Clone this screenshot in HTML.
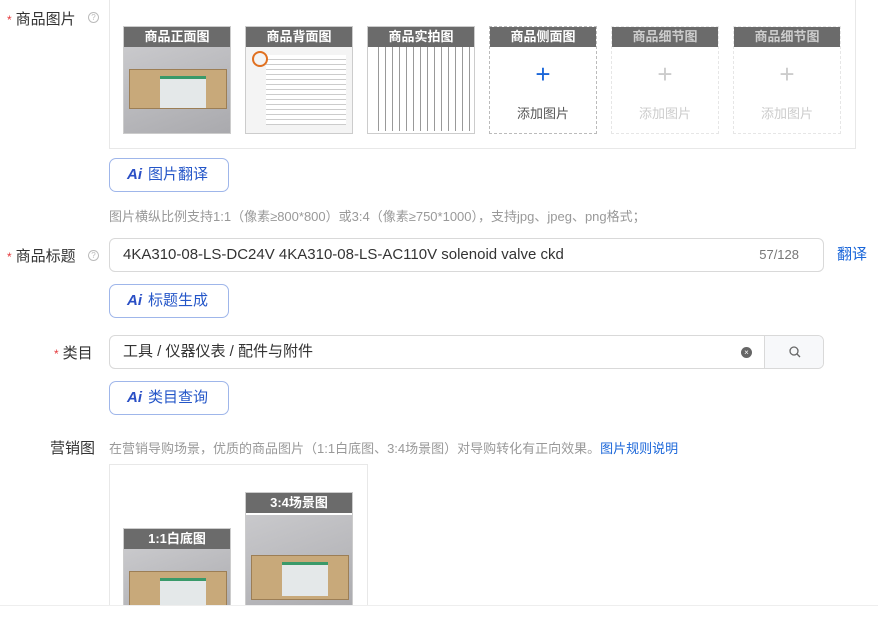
<!DOCTYPE html>
<html style="width:878px;height:625px;overflow:hidden"><head><meta charset="utf-8"><style>
*{box-sizing:border-box;margin:0;padding:0}
body{width:878px;height:625px;overflow:hidden;background:#fff;font-family:"Liberation Sans","Noto Sans CJK SC",sans-serif;position:relative;color:#333}
.a{position:absolute}
.lbl{font-size:15px;color:#333}
.star{color:#e4393c;font-size:12px;margin-right:4px}
.q{width:11px;height:11px;border:1px solid #bbb;border-radius:50%;font-size:8px;color:#bbb;text-align:center;line-height:9px}
.th{position:absolute;width:108px;height:108px;border:1px solid #ccc;background:#fff;overflow:hidden}
.th .h{position:absolute;left:0;top:0;width:100%;height:20px;background:#6b6b6b;color:#fff;font-size:13px;font-weight:bold;text-align:center;line-height:20px}
.add{border:1px dashed #bbb}
.add .p{position:absolute;top:34px;width:100%;text-align:center;font-size:26px;line-height:26px;color:#1a66d9}
.add .t{position:absolute;top:76px;width:100%;text-align:center;font-size:13px;color:#555}
.dis{border:1px dashed #e6e6e6}
.dis .h{color:#ccc}
.dis .p{color:#ccc}.dis .t{color:#ccc}
.btn{position:absolute;left:109px;width:120px;height:34px;border:1px solid #9fb6ea;border-radius:7px;font-size:15px;color:#2456c8;line-height:32px;padding-left:17px}
.btn b{font-style:italic;font-weight:900;margin-right:6px;color:#2a4fc5}
.inp{position:absolute;left:109px;width:715px;height:34px;border:1px solid #d9d9d9;border-radius:6px;font-size:15px;line-height:32px;padding-left:13px;color:#333}
.photo{position:absolute;left:0;top:20px;width:108px;height:88px;background:linear-gradient(160deg,#c9c9cc,#a9a9ad)}
.box{position:absolute;background:#c8a97a;border:1px solid #9c7e55}
.lab{position:absolute;background:#e4e8e9}
</style></head><body>
<div class="a lbl" style="left:7px;top:8px"><span class="star">*</span>商品图片</div>
<div class="a q" style="left:88px;top:12px">?</div>
<div class="a" style="left:109px;top:-2px;width:747px;height:151px;border:1px solid #e8e8e8"></div>

<div class="th" style="left:123px;top:26px"><div class="photo"><div class="box" style="left:5px;top:22px;width:98px;height:40px"><div class="lab" style="left:30px;top:6px;width:46px;height:32px;border-top:3px solid #3a9a6a"></div></div></div><div class="h">商品正面图</div></div>
<div class="th" style="left:245px;top:26px;background:#f4f4f4"><div class="a" style="left:20px;top:28px;width:80px;height:70px;background:repeating-linear-gradient(#fff 0 4px,#ccc 4px 5px)"></div><div class="a" style="left:6px;top:24px;width:16px;height:16px;border:2px solid #e07020;border-radius:50%"></div><div class="h">商品背面图</div></div>
<div class="th" style="left:367px;top:26px"><div class="a" style="left:4px;top:20px;width:100px;height:84px;background:repeating-linear-gradient(90deg,#fff 0 6px,#999 6px 7px)"></div><div class="h">商品实拍图</div></div>
<div class="th add" style="left:489px;top:26px"><div class="h">商品侧面图</div><div class="p">+</div><div class="t">添加图片</div></div>
<div class="th add dis" style="left:611px;top:26px"><div class="h">商品细节图</div><div class="p">+</div><div class="t">添加图片</div></div>
<div class="th add dis" style="left:733px;top:26px"><div class="h">商品细节图</div><div class="p">+</div><div class="t">添加图片</div></div>

<div class="btn" style="top:158px"><b>Ai</b>图片翻译</div>
<div class="a" style="left:109px;top:206px;font-size:13px;color:#999">图片横纵比例支持1:1（像素≥800*800）或3:4（像素≥750*1000），支持jpg、jpeg、png格式；</div>

<div class="a lbl" style="left:7px;top:245px"><span class="star">*</span>商品标题</div>
<div class="a q" style="left:88px;top:250px">?</div>
<div class="inp" style="top:238px">4KA310-08-LS-DC24V 4KA310-08-LS-AC110V solenoid valve ckd<span style="position:absolute;right:24px;font-size:13px;color:#777">57/128</span></div>
<div class="a" style="left:837px;top:243px;font-size:15px;color:#1a66d9">翻译</div>
<div class="btn" style="top:284px"><b>Ai</b>标题生成</div>

<div class="a lbl" style="left:54px;top:342px"><span class="star">*</span>类目</div>
<div class="inp" style="top:335px;overflow:hidden">工具 / 仪器仪表 / 配件与附件
<div class="a" style="left:654px;top:0;width:60px;height:32px;background:#f7f8fa;border-left:1px solid #d9d9d9"><svg width="60" height="32"><circle cx="29" cy="15" r="4" fill="none" stroke="#666" stroke-width="1.3"/><line x1="32" y1="18" x2="35" y2="21" stroke="#666" stroke-width="1.3"/></svg></div>
<div class="a" style="left:631px;top:11px;width:11px;height:11px;border-radius:50%;background:#666;color:#fff;font-size:8px;line-height:11px;text-align:center">×</div>
</div>
<div class="btn" style="top:381px"><b>Ai</b>类目查询</div>

<div class="a lbl" style="left:50px;top:437px">营销图</div>
<div class="a" style="left:109px;top:438px;font-size:13px;color:#999">在营销导购场景，优质的商品图片（1:1白底图、3:4场景图）对导购转化有正向效果。<span style="color:#1a66d9">图片规则说明</span></div>
<div class="a" style="left:109px;top:464px;width:259px;height:150px;border:1px solid #e8e8e8"></div>
<div class="th" style="left:123px;top:528px;height:90px"><div class="photo" style="height:70px"><div class="box" style="left:5px;top:22px;width:98px;height:50px"><div class="lab" style="left:30px;top:6px;width:46px;height:40px;border-top:3px solid #3a9a6a"></div></div></div><div class="h">1:1白底图</div></div>
<div class="th" style="left:245px;top:492px;height:125px"><div class="photo" style="top:22px;height:103px"><div class="box" style="left:5px;top:40px;width:98px;height:45px"><div class="lab" style="left:30px;top:6px;width:46px;height:34px;border-top:3px solid #3a9a6a"></div></div></div><div class="h">3:4场景图</div></div>
<div class="a" style="left:0;top:605px;width:878px;height:20px;background:#fff;border-top:1px solid #eee;z-index:5"></div>
</body></html>
